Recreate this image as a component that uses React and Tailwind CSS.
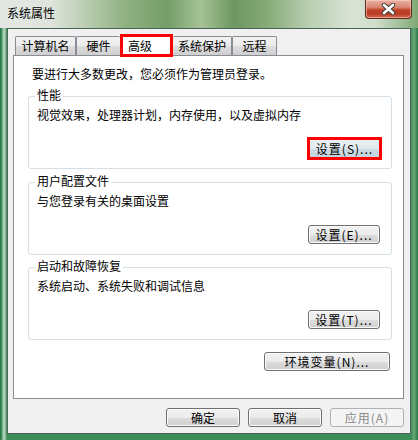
import React from "react"

const btnBase =
  "flex items-center justify-center rounded-[3px] text-[12px] leading-[14px]"
const btnNormal =
  "border border-[#707070] text-black bg-[linear-gradient(to_bottom,#f2f2f2_0%,#ebebeb_50%,#dddddd_51%,#cfcfcf_100%)] shadow-[inset_0_0_0_1px_#fbfbfb]"

const Button = ({ children, className = "", disabled = false }) => (
  <div
    className={`${btnBase} ${
      disabled
        ? "border border-[#adb2b5] bg-[#f4f4f4] text-[#8a8a8a]"
        : btnNormal
    } ${className}`}
  >
    {children}
  </div>
)

const Tab = ({ label, className = "" }) => (
  <div
    className={`flex h-[19px] items-center justify-center rounded-t-[2px] border border-b-0 border-[#898c95] bg-[linear-gradient(to_bottom,#f2f2f2_0%,#ebebeb_50%,#dddddd_51%,#cfcfcf_100%)] text-[12px] leading-[14px] ${className}`}
  >
    {label}
  </div>
)

const Group = ({ title, text, children, className = "" }) => (
  <div
    className={`relative flex h-[73px] w-[364px] flex-col rounded-[3px] border border-[#d5dfe5] ${className}`}
  >
    <span className="absolute -top-[9px] left-[6px] bg-white px-[2px] text-[12px] leading-[14px]">
      {title}
    </span>
    <p className="pl-[8px] pt-[11px] text-[12px] leading-[14px]">{text}</p>
    {children}
  </div>
)

const CloseButton = () => (
  <div className="mr-[6px] flex h-[19px] w-[47px] items-center justify-center rounded-b-[4px] border border-t-0 border-[#5e2a20] bg-[linear-gradient(to_bottom,#eab0a3_0%,#d98772_40%,#c4442a_55%,#b93a22_75%,#d46a50_100%)] shadow-[inset_0_0_0_1px_rgba(255,220,210,0.5)]">
    <svg width="15" height="12" viewBox="0 0 15 12">
      <path
        d="M3 2 L12 10 M12 2 L3 10"
        stroke="#3a3a3a"
        strokeWidth="4.4"
        strokeLinecap="round"
        fill="none"
      />
      <path
        d="M3 2 L12 10 M12 2 L3 10"
        stroke="#ffffff"
        strokeWidth="2.6"
        strokeLinecap="round"
        fill="none"
      />
    </svg>
  </div>
)

export default function App() {
  return (
    <div className="h-[440px] w-[418px] overflow-hidden bg-[linear-gradient(to_right,#1f6a40_0px,#4fa06a_2px,#c9dccd_4px,#3d8c5a_7px,#3d8c5a_411px,#6aa877_414px,#2a7648_418px)] font-['Noto_Sans_CJK_SC','Liberation_Sans',sans-serif] text-black">
      <div className="flex h-[28px] justify-between bg-[linear-gradient(90deg,#e3e7e3_0%,#dfe5dd_12%,#bccfb4_20%,#90b182_30%,#739e67_40%,#a6c297_48%,#6c975f_56%,#86ab78_64%,#b9cfb2_74%,#d8e3d5_84%,#cfdecb_90%,#7ea874_100%)]">
        <div className="pl-[7px] pt-[6px] text-[12px] leading-[14px]">系统属性</div>
        <CloseButton />
      </div>

      <div className="ml-[7px] flex h-[406px] w-[404px] flex-col border border-[#4f6457] bg-[#f0f0f0]">
        <div className="ml-[7px] mt-[4px] flex h-[22px] items-end">
          <Tab label="计算机名" className="w-[61px]" />
          <Tab label="硬件" className="w-[44px] border-r-0" />
          <div className="relative z-10 mb-[-2px] flex h-[23px] w-[53px] items-center border-[3px] border-[#ff0000] bg-white pl-[5px] text-[12px] leading-[14px]">
            高级
          </div>
          <Tab label="系统保护" className="w-[59px] border-l-0" />
          <Tab label="远程" className="w-[45px]" />
        </div>

        <div className="ml-[5px] flex h-[344px] w-[391px] flex-col border border-[#898c95] bg-white">
          <p className="pl-[18px] pt-[11px] text-[12px] leading-[14px]">
            要进行大多数更改，您必须作为管理员登录。
          </p>

          <Group
            title="性能"
            text="视觉效果，处理器计划，内存使用，以及虚拟内存"
            className="ml-[14px] mt-[15px]"
          >
            <div className="mt-[15px] flex justify-end pr-[9px]">
              <div className="flex h-[23px] w-[75px] items-center justify-center border-[3px] border-[#ff0000] bg-[linear-gradient(to_bottom,#e9f0f4_0%,#e0e9ee_50%,#cfdde5_51%,#c2d3dc_100%)] text-[12px] leading-[14px] tracking-[1px]">
                设置(S)...
              </div>
            </div>
          </Group>

          <Group
            title="用户配置文件"
            text="与您登录有关的桌面设置"
            className="ml-[14px] mt-[13px]"
          >
            <div className="mt-[17px] flex justify-end pr-[11px]">
              <Button className="h-[19px] w-[72px] tracking-[1px]">设置(E)...</Button>
            </div>
          </Group>

          <Group
            title="启动和故障恢复"
            text="系统启动、系统失败和调试信息"
            className="ml-[14px] mt-[12px]"
          >
            <div className="mt-[17px] flex justify-end pr-[11px]">
              <Button className="h-[19px] w-[72px] tracking-[1px]">设置(T)...</Button>
            </div>
          </Group>

          <div className="mt-[12px] flex justify-end pr-[13px]">
            <Button className="h-[19px] w-[126px] tracking-[1px]">环境变量(N)...</Button>
          </div>
        </div>

        <div className="mt-[9px] flex justify-end gap-[8px] pr-[6px]">
          <Button className="h-[19px] w-[74px]">确定</Button>
          <Button className="h-[19px] w-[74px]">取消</Button>
          <Button className="h-[19px] w-[74px] tracking-[1px]" disabled>
            应用(A)
          </Button>
        </div>
      </div>
    </div>
  )
}
